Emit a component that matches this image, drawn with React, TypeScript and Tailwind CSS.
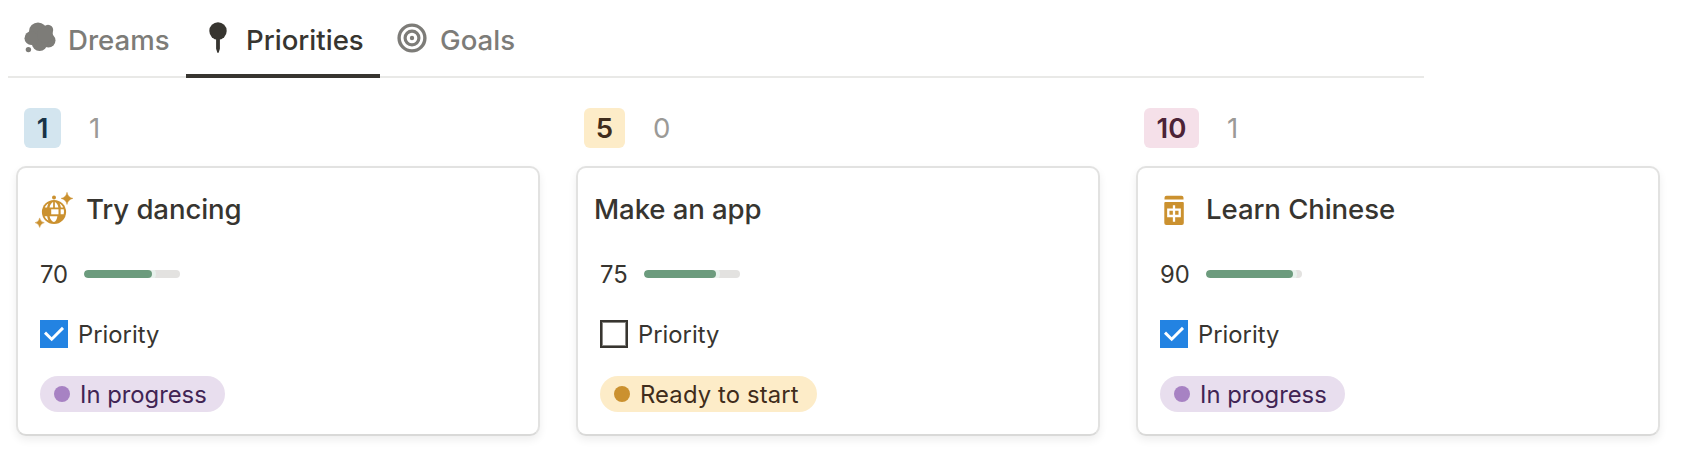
import React from "react";

type Item = {
  group: string;
  groupClass: string;
  count: number;
  title: string;
  icon?: React.ReactNode;
  progress: number;
  numberClass: string;
  fillWidth: number;
  priority: boolean;
  status: string;
  pillClass: string;
  dotClass: string;
  statusClass: string;
};

function CloudIcon() {
  return (
    <svg width="36" height="36" viewBox="22 20 36 36" fill="#7d7c78" className="shrink-0">
      <circle cx="38" cy="31.4" r="9" />
      <circle cx="48" cy="30" r="5.2" />
      <circle cx="48.4" cy="40.4" r="7.1" />
      <circle cx="39.6" cy="43.2" r="7.8" />
      <circle cx="31.4" cy="38.2" r="6.9" />
      <circle cx="45" cy="35" r="8" />
      <circle cx="28.4" cy="49.6" r="2.7" />
    </svg>
  );
}

function PinIcon() {
  return (
    <svg width="36" height="36" viewBox="200 20 36 36" fill="#373530" className="shrink-0">
      <circle cx="218" cy="31" r="8.700" />
      <path d="M216.100 38h3.800v10.800l-1.200 3.800a.75.75 0 0 1-1.400 0l-1.200-3.800z" />
    </svg>
  );
}

function TargetIcon() {
  return (
    <svg width="36" height="36" viewBox="394 20 36 36" fill="none" stroke="#7d7c78" className="shrink-0">
      <circle cx="412" cy="38" r="12.9" strokeWidth="3.4" />
      <circle cx="412" cy="38" r="6.9" strokeWidth="3.2" />
      <circle cx="412" cy="38" r="2.2" fill="#7d7c78" stroke="none" />
    </svg>
  );
}

function DiscoIcon() {
  return (
    <svg width="40" height="40" viewBox="34 190 40 40" fill="#cb912f" className="shrink-0">
      <path d="M67 192.200q1 5.200 6 6.200-5 1-6 6.200-1-5.200-6-6.200 5-1 6-6.200z" stroke="#cb912f" strokeWidth=".4" />
      <path d="M39.700 217.900q.8 4 4.600 4.800-3.800.8-4.600 4.800-.8-4-4.600-4.800 3.800-.8 4.600-4.800z" stroke="#cb912f" strokeWidth=".4" />
      <circle cx="54" cy="197.600" r="2" />
      <circle cx="54" cy="212" r="12.100" />
      <g fill="#fff">
        <path d="M53.100 202v5.500h-3.500c.4-2.700 1.900-4.900 3.500-5.500z" />
        <path d="M54.900 202v5.500h3.500c-.4-2.700-1.900-4.900-3.500-5.500z" />
        <path d="M48.400 203.400c-.7 1.200-1.100 2.600-1.300 4.100h-2.300c.7-1.700 1.900-3.200 3.600-4.100z" />
        <path d="M59.600 203.400c.7 1.200 1.100 2.600 1.300 4.100h2.300c-.7-1.700-1.900-3.200-3.600-4.100z" />
        <path d="M51.200 209.300h7.300v5h-7.300z" />
        <path d="M60.600 209.300h3.100c.4 1.600.4 3.300 0 5h-3.100z" />
        <path d="M44.600 216.300h2.600c.2 1.700.6 3.100 1.300 4.300-1.800-.9-3.200-2.500-3.900-4.300z" />
        <path d="M49.600 216.300h7.800c-.5 3-1.800 5.600-3.500 5.600s-3.800-2.600-4.300-5.600z" />
      </g>
    </svg>
  );
}

function MahjongIcon() {
  return (
    <svg width="40" height="40" viewBox="1154 190 40 40" fill="#cb912f" className="shrink-0">
      <path d="M1166.500 195.700h15a2 2 0 0 1 2 2v1.900h-19v-1.900a2 2 0 0 1 2-2z" />
      <path d="M1165.300 202h17.500a1 1 0 0 1 1 1v20a2 2 0 0 1-2 2h-15.500a2 2 0 0 1-2-2v-20a1 1 0 0 1 1-1z" />
      <path
        d="M1168.300 209.700h11.400v6.300h-11.400zM1174 205.300v16.400"
        fill="none"
        stroke="#fff"
        strokeWidth="2.300"
      />
    </svg>
  );
}

function Checkbox({ checked }: { checked: boolean }) {
  if (!checked) {
    return <span className="size-7 shrink-0 border-2 border-[#373530] shadow-[inset_0_0_0_1px_#8a8985]" />;
  }
  return (
    <span className="flex size-7 shrink-0 items-center justify-center bg-[#2383e2]">
      <svg width="28" height="28" viewBox="0 0 28 28" fill="none" stroke="#fff" strokeWidth="2.900">
        <path d="M5 12.600l6.700 6.600L23 7.900" />
      </svg>
    </span>
  );
}

const items: Item[] = [
  {
    group: "1",
    groupClass: "w-[37px] bg-[#d3e5ef] text-[#183347]",
    count: 1,
    title: "Try dancing",
    icon: <DiscoIcon />,
    progress: 70,
    numberClass: "w-11",
    fillWidth: 68,
    priority: true,
    status: "In progress",
    pillClass: "w-[185px] bg-[#e8deee]",
    dotClass: "bg-[#a782c3]",
    statusClass: "text-[#412454]",
  },
  {
    group: "5",
    groupClass: "w-[41px] bg-[#fdecc8] text-[#402c1b]",
    count: 0,
    title: "Make an app",
    progress: 75,
    numberClass: "w-11",
    fillWidth: 72,
    priority: false,
    status: "Ready to start",
    pillClass: "w-[217px] bg-[#fdecc8]",
    dotClass: "bg-[#cb912f]",
    statusClass: "tracking-[0.15px] text-[#402c1b]",
  },
  {
    group: "10",
    groupClass: "w-[55px] bg-[#f5e0e9] text-[#4c2337]",
    count: 1,
    title: "Learn Chinese",
    icon: <MahjongIcon />,
    progress: 90,
    numberClass: "w-[46px]",
    fillWidth: 87,
    priority: true,
    status: "In progress",
    pillClass: "w-[185px] bg-[#e8deee]",
    dotClass: "bg-[#a782c3]",
    statusClass: "text-[#412454]",
  },
];

function Card({ item }: { item: Item }) {
  return (
    <article className="flex h-[270px] flex-col rounded-[10px] border-2 border-[#e2e2e1] border-b-[#d9d9d8] bg-white pl-[16px] pt-[22px] shadow-[0_4px_8px_rgba(15,15,15,0.07)]">
      <h3 className="flex h-10 items-center text-[27.6px] font-[550]">
        {item.icon && <span className="mr-3 flex">{item.icon}</span>}
        <span className="tracking-[-0.1px]">{item.title}</span>
      </h3>
      <div className="ml-[6px] mt-[26px] flex h-9 items-center text-[23.8px]">
        <span className={"pt-[2px] " + item.numberClass}>{item.progress}</span>
        <div className="h-2 w-24 overflow-hidden rounded-full bg-[#e3e2e0]">
          <div
            className="h-2 rounded-full bg-[#6c9b7d] shadow-[0_0_0_4px_#e8f1ec]"
            style={{ width: item.fillWidth }}
          />
        </div>
      </div>
      <div className="ml-[6px] mt-6 flex h-9 items-center gap-[10px] text-[23.8px]">
        <Checkbox checked={item.priority} />
        <span className="pt-[2px]">Priority</span>
      </div>
      <div className="ml-[6px] mt-6 flex">
        <span className={"flex h-9 items-center rounded-full pl-[14px] text-[23.8px] " + item.pillClass}>
          <span className={"mr-[10px] size-4 shrink-0 rounded-full " + item.dotClass} />
          <span className={"whitespace-nowrap pt-[2px] " + item.statusClass}>{item.status}</span>
        </span>
      </div>
    </article>
  );
}

export default function App() {
  return (
    <main className="h-[462px] w-[1688px] overflow-hidden bg-white font-[Inter,sans-serif] text-[#373530]">
      <nav className="ml-2 flex h-[78px] w-[1416px] border-b-2 border-[#e9e9e7] text-[27.6px] font-[550]">
        <div className="flex h-[78px] w-[178px] items-center pb-[2px] pl-[14px] text-[#7d7c78]">
          <CloudIcon />
          <span className="ml-[10px] mt-[5px]">Dreams</span>
        </div>
        <div className="flex h-[78px] w-[194px] items-center border-b-4 border-[#373530] pl-[14px] pt-[2px]">
          <PinIcon />
          <span className="ml-[10px] mt-[5px]">Priorities</span>
        </div>
        <div className="flex h-[78px] items-center pb-[2px] pl-[14px] text-[#7d7c78]">
          <TargetIcon />
          <span className="ml-[10px] mt-[5px]">Goals</span>
        </div>
      </nav>
      <div className="ml-4 mt-[30px] grid w-[1644px] grid-cols-3 gap-9">
        {items.map((item) => (
          <section key={item.title}>
            <header className="mb-[18px] flex h-10 items-center pl-2 text-[27.6px]">
              <span
                className={
                  "flex h-10 items-center justify-center rounded-md pt-[2px] font-semibold " + item.groupClass
                }
              >
                {item.group}
              </span>
              <span className="ml-7 pt-[2px] text-[#9b9a97]">{item.count}</span>
            </header>
            <Card item={item} />
          </section>
        ))}
      </div>
    </main>
  );
}
